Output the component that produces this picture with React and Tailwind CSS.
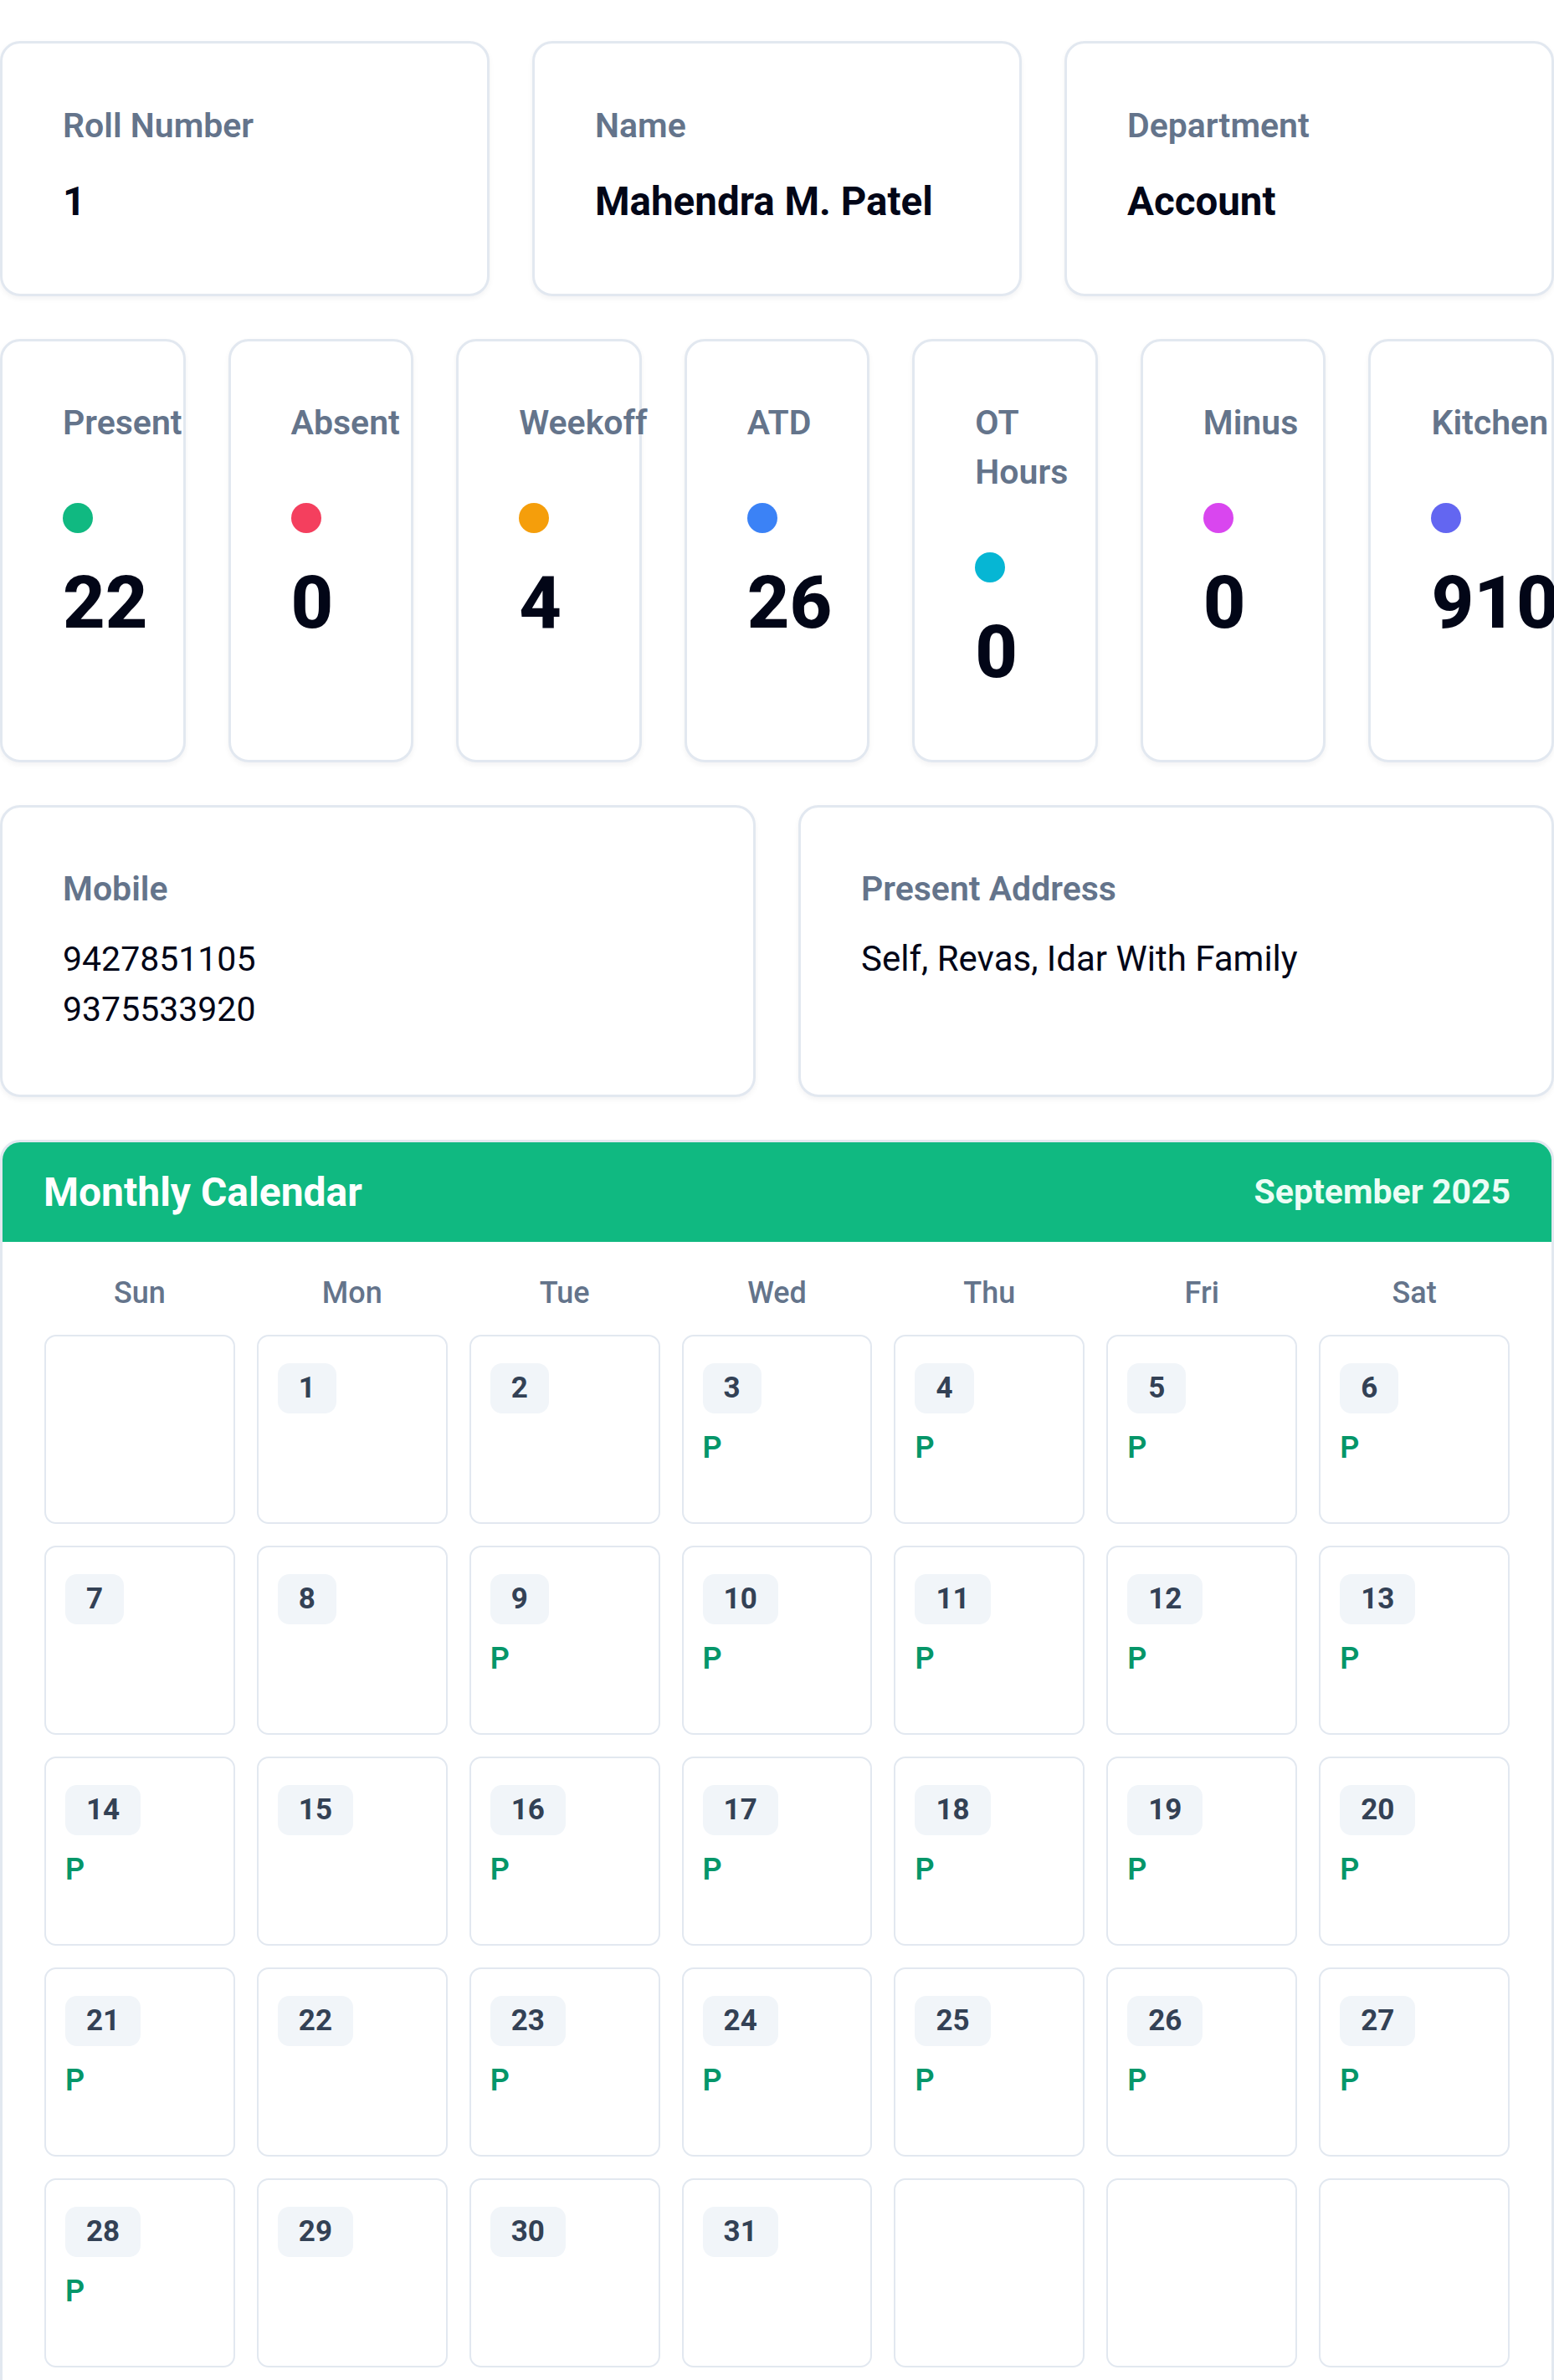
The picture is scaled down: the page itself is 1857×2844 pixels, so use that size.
import React from "react";

const info = [
    { label: "Roll Number", value: "1" },
    { label: "Name", value: "Mahendra M. Patel" },
    { label: "Department", value: "Account" },
];

const stats = [
    { label: "Present", value: "22", dot: "bg-[#10b981]" },
    { label: "Absent", value: "0", dot: "bg-[#f43f5e]" },
    { label: "Weekoff", value: "4", dot: "bg-[#f59e0b]" },
    { label: "ATD", value: "26", dot: "bg-[#3b82f6]" },
    { label: "OT Hours", value: "0", dot: "bg-[#06b6d4]" },
    { label: "Minus", value: "0", dot: "bg-[#d946ef]" },
    { label: "Kitchen", value: "910", dot: "bg-[#6366f1]" },
];

const weekDays = ["Sun", "Mon", "Tue", "Wed", "Thu", "Fri", "Sat"];
const presentDays = [3, 4, 5, 6, 9, 10, 11, 12, 13, 14, 16, 17, 18, 19, 20, 21, 23, 24, 25, 26, 27, 28];

// 1 leading blank, 31 days, 3 trailing blanks
const cells = [null, ...Array.from({ length: 31 }, (_, i) => i + 1), null, null, null];

const card = "bg-white border-[3px] border-[#e2e8f0] rounded-[24px] shadow-[0_3px_6px_0_rgba(15,23,42,0.05)]";
const label = "text-[41px] leading-[59px] font-semibold text-[#64748b]";

function InfoCard({ item }) {
    return (
        <div className={`${card} px-[72px] pt-[69px] pb-[75px]`}>
            <div className={label}>{item.label}</div>
            <div className="mt-[26px] text-[47.5px] leading-[70px] font-bold text-[#020617]">{item.value}</div>
        </div>
    );
}

function StatCard({ item }) {
    return (
        <div className={`${card} min-w-0 px-[72px] pt-[68px] pb-[76px]`}>
            <div className={label}>{item.label}</div>
            <div className={`mt-[66px] w-[36px] h-[36px] rounded-full ${item.dot}`} />
            <div className="mt-[30px] text-[88px] leading-[106px] font-extrabold text-[#020617] whitespace-nowrap">
                {item.value}
            </div>
        </div>
    );
}

function DayCell({ day }) {
    return (
        <div className="h-[226px] border-[2.5px] border-[#e2e8f0] rounded-[14px] bg-white pt-[32px] px-[23px]">
            {day && (
                <>
                    <span className="inline-flex items-center h-[60px] px-[25px] rounded-[14px] bg-[#f1f5f9] text-[35px] font-bold text-[#334155]">
                        {day}
                    </span>
                    {presentDays.includes(day) && (
                        <div className="mt-[16px] text-[36px] leading-[50px] font-semibold text-[#059669]">P</div>
                    )}
                </>
            )}
        </div>
    );
}

export default function App() {
    return (
        <div className="w-full min-h-screen bg-white pt-[49px] font-['Roboto',sans-serif] overflow-hidden">
            <div className="flex flex-col gap-[51px]">
                <div className="grid grid-cols-3 gap-[51px]">
                    {info.map((item) => (
                        <InfoCard key={item.label} item={item} />
                    ))}
                </div>

                <div className="grid grid-cols-7 gap-[51px]">
                    {stats.map((item) => (
                        <StatCard key={item.label} item={item} />
                    ))}
                </div>

                <div className="grid grid-cols-2 gap-[51px]">
                    <div className={`${card} px-[72px] pt-[68px] pb-[72px]`}>
                        <div className={label}>Mobile</div>
                        <div className="mt-[24px] text-[41px] leading-[60px] text-[#020617]">
                            <div>9427851105</div>
                            <div>9375533920</div>
                        </div>
                    </div>
                    <div className={`${card} px-[72px] pt-[68px] pb-[72px]`}>
                        <div className={label}>Present Address</div>
                        <div className="mt-[24px] text-[42px] leading-[60px] text-[#020617]">
                            Self, Revas, Idar With Family
                        </div>
                    </div>
                </div>

                <section className={`${card} overflow-hidden`}>
                    <header className="h-[119px] bg-[#10b981] px-[49px] flex items-center justify-between">
                        <h2 className="text-[48px] font-bold text-white">Monthly Calendar</h2>
                        <span className="text-[41px] font-bold text-[#ecfdf5]">September 2025</span>
                    </header>
                    <div className="px-[50px] pt-[36px] pb-[51px]">
                        <div className="grid grid-cols-7 gap-x-[26px]">
                            {weekDays.map((d) => (
                                <div key={d} className="h-[50px] flex items-center justify-center text-[36px] font-medium text-[#64748b]">
                                    {d}
                                </div>
                            ))}
                        </div>
                        <div className="mt-[25px] grid grid-cols-7 gap-[26px]">
                            {cells.map((day, i) => (
                                <DayCell key={i} day={day} />
                            ))}
                        </div>
                    </div>
                </section>
            </div>
        </div>
    );
}
